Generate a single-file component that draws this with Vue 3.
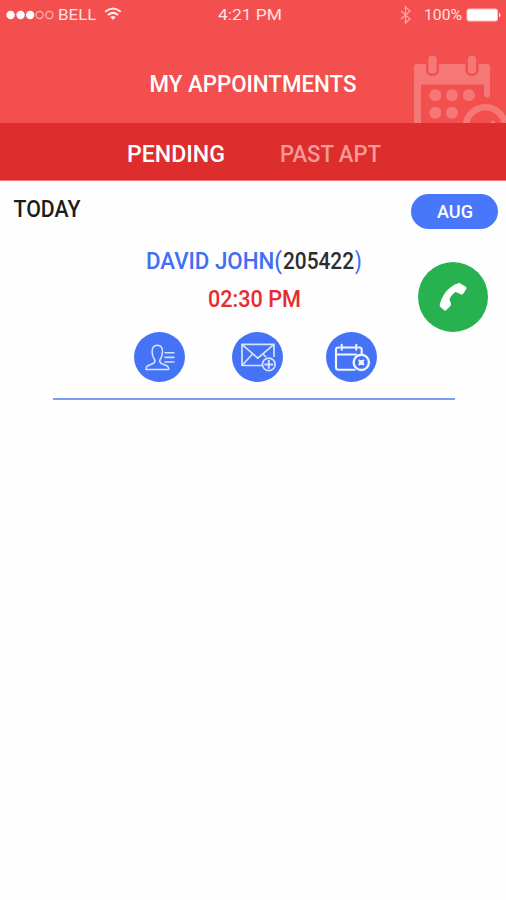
<script setup>
import { ref } from 'vue'

const activeTab = ref('pending')
const tabs = [
  { id: 'pending', label: 'PENDING', width: 98 },
  { id: 'past', label: 'PAST APT', width: 101 }
]
</script>

<template>
  <main class="screen">
    <header class="header">
      <div class="status">
        <div class="carrier">
          <svg class="signal" width="50" height="12" viewBox="0 0 50 12">
            <g fill="#fff">
              <circle cx="4.6" cy="6" r="4.2" /><circle cx="14.6" cy="6" r="4.2" /><circle cx="24.2" cy="6" r="4.2" />
            </g>
            <g fill="none" stroke="#fcb5b2" stroke-width="1.2">
              <circle cx="33.6" cy="6" r="3.6" /><circle cx="43.4" cy="6" r="3.6" />
            </g>
          </svg>
          <svg class="label bell" width="39" height="20"><text x="0" y="15" textLength="38.5" lengthAdjust="spacingAndGlyphs">BELL</text></svg>
          <svg class="wifi" width="18" height="14" viewBox="0 0 18 14">
            <g fill="none" stroke="#ffe9e7" stroke-width="2">
              <path d="M1.2 4.8Q9-1.8 16.8 4.8" /><path d="M4 8Q9 3.8 14 8" />
            </g>
            <path d="M6.2 10Q9 7.8 11.8 10L9 13Z" fill="#ffe9e7" />
          </svg>
        </div>
        <svg class="label" width="65" height="20"><text x="0" y="15" textLength="64" lengthAdjust="spacingAndGlyphs">4:21 PM</text></svg>
        <div class="power">
          <svg class="bluetooth" width="12" height="18" viewBox="0 0 12 18">
            <path d="M1 5l9 8-4.5 4V1L10 5l-9 8" fill="none" stroke="#faa4a0" stroke-width="1.3" />
          </svg>
          <svg class="label percent" width="39" height="20"><text x="0" y="15" textLength="38" lengthAdjust="spacingAndGlyphs">100%</text></svg>
          <svg width="36" height="14" viewBox="0 0 36 14">
            <rect x="1" y="1" width="30.5" height="12" rx="2" fill="#fff" stroke="#ffc0bd" />
            <path d="M33 4.5Q36 7 33 9.5Z" fill="#ffe2e0" />
          </svg>
        </div>
      </div>
      <div class="title-row">
        <svg class="title" width="214" height="30"><text x="1.5" y="23.5" textLength="207" lengthAdjust="spacingAndGlyphs">MY APPOINTMENTS</text></svg>
        <svg class="calendar" width="92" height="68" viewBox="414 55 92 68">
          <g fill="#f67876">
            <path fill-rule="evenodd" d="M417 64H426V70C426 78 439 78 439 70V64H465.5V70C465.5 78 478.5 78 478.5 70V64H487Q490 64 490 67V96Q487 99 484 96V84.5H421V123H414V67Q414 64 417 64Z" />
            <rect x="428.4" y="56" width="8.2" height="17.5" rx="3" />
            <rect x="468" y="56" width="8" height="17.5" rx="3" />
            <circle cx="435.3" cy="95.3" r="6" /><circle cx="452" cy="95.3" r="6" /><circle cx="469" cy="95.3" r="6" />
            <circle cx="435.3" cy="112.7" r="6" /><circle cx="452" cy="112.7" r="6" />
          </g>
          <circle cx="485.5" cy="127" r="19.8" fill="none" stroke="#f67876" stroke-width="6.5" />
          <path d="M490.5 123l2.5-3 2.5 3z" fill="#f67876" />
        </svg>
      </div>
    </header>

    <nav class="tabs">
      <button
        v-for="tab in tabs"
        :key="tab.id"
        class="tab"
        :class="{ active: activeTab === tab.id }"
        @click="activeTab = tab.id"
      >
        <svg :width="tab.width + 4" height="30"><text x="2" y="24.5" :textLength="tab.width" lengthAdjust="spacingAndGlyphs">{{ tab.label }}</text></svg>
      </button>
    </nav>

    <section class="day">
      <svg class="today" width="74" height="30"><text x="1.5" y="23" textLength="67" lengthAdjust="spacingAndGlyphs">TODAY</text></svg>
      <button class="month">
        <svg width="40" height="22"><text x="2" y="17" textLength="36" lengthAdjust="spacingAndGlyphs">AUG</text></svg>
      </button>
    </section>

    <article class="appointment">
      <div class="details">
        <div class="name">
          <svg width="138" height="30"><text x="1" y="22" textLength="136" lengthAdjust="spacingAndGlyphs">DAVID JOHN(</text></svg>
          <svg class="code" width="72" height="30"><text x="0" y="22" textLength="71" lengthAdjust="spacingAndGlyphs">205422</text></svg>
          <svg width="9" height="30"><text x="0" y="22" textLength="6.5" lengthAdjust="spacingAndGlyphs">)</text></svg>
        </div>
        <svg class="time" width="96" height="30"><text x="1" y="22" textLength="93" lengthAdjust="spacingAndGlyphs">02:30 PM</text></svg>
      </div>
      <button class="call">
        <svg width="30" height="30" viewBox="0 0 30 30">
          <path d="M1.8 22.6C4 12.5 11 4.2 20.2 1.2Q22.2.6 23 2L28 4.8Q29.4 6 27.6 8L25.4 11.6Q24 13 22.6 12.2L17.8 10C15 11.6 12.8 14 11.4 17.3L13 21.6Q13.4 23.4 12 24.4L8.3 28.1Q7 29.4 5.6 27.8L2.3 24.9Q1.4 24.2 1.8 22.6Z" fill="#fff" />
        </svg>
      </button>
      <div class="actions">
        <button class="action">
          <svg width="50" height="50" viewBox="0 0 50 50">
            <g fill="none" stroke="#d6e2ff" stroke-width="1.6" stroke-linejoin="round">
              <path d="M11 37.5C11 33.8 13 33.5 17 32C20 30.8 20.5 29 19.5 27.5C18 25.5 17.2 24 17.2 20.5C16.8 16 18.5 13.2 22.3 13.2S27.8 16 27.4 20.5C27.4 24 26.5 25.5 25.2 27.5C24.2 29 24.7 30.8 27.5 32C31.6 33.5 33.7 33.8 33.7 37.5Z" />
              <path d="M29.5 20.8h10M29.5 25.4h10M29.5 30h10" />
            </g>
          </svg>
        </button>
        <button class="action">
          <svg width="50" height="50" viewBox="0 0 50 50">
            <g fill="none" stroke="#d6e2ff" stroke-width="1.7">
              <path d="M29 33.5H9V12.3H41V25" />
              <path d="M9 12.3L24.8 26.2L41 12.3M9 33.5L19.5 22M30 22L33 25" />
              <circle cx="35.8" cy="32.4" r="6.3" />
              <path d="M35.8 28v8.8M31.4 32.4H40.2" stroke-width="2" />
            </g>
          </svg>
        </button>
        <button class="action">
          <svg width="50" height="50" viewBox="0 0 50 50">
            <g fill="none" stroke="#f0f5ff" stroke-width="2.1" stroke-linecap="round" stroke-linejoin="round">
              <path d="M27.5 37.7H11.2Q9 37.7 9 35.5V17.5Q9 15.5 11.2 15.5H12.5M14.7 15.5H29.3M31.5 15.5H32.5Q34.7 15.5 34.7 17.5V21.5M9 22.5H29M14.7 12.7v5M29.3 12.7v5" />
              <circle cx="34.3" cy="30.4" r="7.6" stroke-width="2.4" />
            </g>
            <path d="M31.6 27.7l5.4 5.4M37 27.7l-5.4 5.4" stroke="#f0f5ff" stroke-width="1.6" />
            <circle cx="34.3" cy="30.4" r="2.5" fill="#f0f5ff" />
          </svg>
        </button>
      </div>
      <hr class="divider" />
    </article>
  </main>
</template>

<style>
body {
  margin: 0;
  background: #fefefe;
}
</style>

<style scoped>
.screen {
  width: 506px;
  height: 900px;
  overflow: hidden;
  background: #fefefe;
  font-family: Roboto, "Liberation Sans", sans-serif;
}
svg {
  display: block;
  flex: none;
  overflow: visible;
}
button {
  display: flex;
  align-items: center;
  justify-content: center;
  padding: 0;
  border: 0;
  background: none;
  font: inherit;
}
.header {
  height: 123px;
  background: #f34f4e;
}
.status {
  display: grid;
  grid-template-columns: 218px 65px 1fr;
  height: 30px;
  align-items: center;
}
.status .label {
  fill: #ffe3e1;
  font-size: 15.5px;
}
.carrier {
  display: flex;
  align-items: center;
  padding-left: 6px;
}
.bell {
  margin-left: 2px;
}
.wifi {
  margin: 0 0 3px 7px;
}
.power {
  display: flex;
  align-items: center;
  justify-content: flex-end;
  padding-right: 4px;
}
.percent {
  margin: 0 3px 0 12px;
}
.title-row {
  display: flex;
  justify-content: space-between;
  padding: 25px 0 0 148px;
}
.title {
  margin-top: 13px;
  fill: #fff;
  font-size: 24px;
  font-weight: 500;
}
.calendar {
  overflow: hidden;
}
.tabs {
  display: flex;
  gap: 51px;
  height: 57px;
  padding-left: 125px;
  background: #de2d2d;
  border-bottom: 1px solid #ee7777;
}
.tab {
  fill: #f49a99;
  font-size: 23px;
  font-weight: 500;
}
.tab.active {
  fill: #fff;
}
.day {
  display: flex;
  justify-content: space-between;
  align-items: flex-start;
  height: 61px;
  padding: 13px 8px 0 12px;
  box-sizing: border-box;
}
.today {
  fill: #1d1d1d;
  font-size: 23px;
  font-weight: 500;
}
.month {
  width: 87px;
  height: 35px;
  border-radius: 18px;
  background: #4977fc;
  fill: #fff;
  font-size: 18px;
  font-weight: 500;
}
.appointment {
  display: grid;
  grid-template-columns: 400px 106px;
}
.details {
  padding: 5px 0 0 145px;
}
.name {
  display: flex;
  fill: #416ff2;
  font-size: 23px;
  font-weight: 500;
}
.name .code {
  fill: #2d2d2d;
}
.time {
  margin: 8px 0 0 62px;
  fill: #e52c2f;
  font-size: 23px;
  font-weight: 500;
}
.call {
  width: 70px;
  height: 70px;
  margin: 20px 0 0 18px;
  border-radius: 50%;
  background: #27b24f;
}
.actions {
  grid-column: 1 / -1;
  display: flex;
  padding-left: 134px;
}
.action {
  width: 51px;
  height: 50px;
  border-radius: 50%;
  background: #4473f6;
}
.action:nth-child(2) {
  margin-left: 47px;
}
.action:nth-child(3) {
  margin-left: 43px;
}
.divider {
  grid-column: 1 / -1;
  width: 402px;
  height: 2px;
  margin: 16px 0 0 53px;
  border: 0;
  background: #7f9bf4;
}
</style>
